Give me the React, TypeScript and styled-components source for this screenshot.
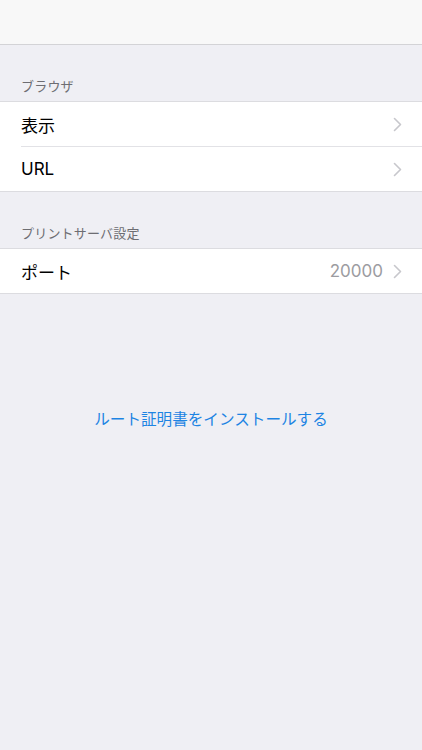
import React, { FC } from "react";
import styled, { createGlobalStyle } from "styled-components";

const GlobalStyle = createGlobalStyle`
  html, body {
    margin: 0;
    padding: 0;
    background: #efeff4;
  }
  body {
    font-family: Inter, "Noto Sans CJK JP", sans-serif;
    -webkit-font-smoothing: antialiased;
  }
`;

const Page = styled.div`
  width: 422px;
  min-height: 750px;
  background: #efeff4;
  display: flex;
  flex-direction: column;
`;

const NavBar = styled.div`
  height: 45px;
  box-sizing: border-box;
  background: #f8f8f8;
  border-bottom: 1px solid #d3d3d6;
`;

const SectionHeader = styled.div`
  height: 56px;
  box-sizing: border-box;
  display: flex;
  align-items: flex-end;
  padding: 0 21px 6px;
  font-size: 13px;
  color: #6d6d72;
  letter-spacing: 0.2px;
`;

const Group = styled.div`
  background: #fff;
  border-top: 1px solid #dcdce0;
  border-bottom: 1px solid #dcdce0;
`;

const Row = styled.div<{ $last?: boolean }>`
  height: 44px;
  display: flex;
  align-items: center;
  margin-left: 21px;
  padding-right: 20px;
  border-bottom: ${(p): string => (p.$last ? "none" : "1px solid #e2e2e6")};
`;

const Label = styled.div`
  flex: 1;
  font-size: 17px;
  color: #000;
`;

const Detail = styled.div`
  font-size: 17px;
  color: #9c9ca1;
  margin-right: 10px;
`;

const LinkText = styled.div`
  margin-top: 113px;
  text-align: center;
  font-size: 15.6px;
  color: #1d84e3;
`;

const Chevron: FC = () => (
  <svg width="9" height="15" viewBox="0 0 9 15">
    <path
      d="M1.5 1.5 L7.5 7.5 L1.5 13.5"
      fill="none"
      stroke="#c7c7cc"
      strokeWidth="1.6"
      strokeLinecap="round"
      strokeLinejoin="round"
    />
  </svg>
);

const App: FC = () => {
  return (
    <>
      <GlobalStyle />
      <Page>
        <NavBar />
        <SectionHeader>ブラウザ</SectionHeader>
        <Group>
          <Row>
            <Label>表示</Label>
            <Chevron />
          </Row>
          <Row $last>
            <Label>URL</Label>
            <Chevron />
          </Row>
        </Group>
        <SectionHeader>プリントサーバ設定</SectionHeader>
        <Group>
          <Row $last>
            <Label>ポート</Label>
            <Detail>20000</Detail>
            <Chevron />
          </Row>
        </Group>
        <LinkText>ルート証明書をインストールする</LinkText>
      </Page>
    </>
  );
};

export default App;
